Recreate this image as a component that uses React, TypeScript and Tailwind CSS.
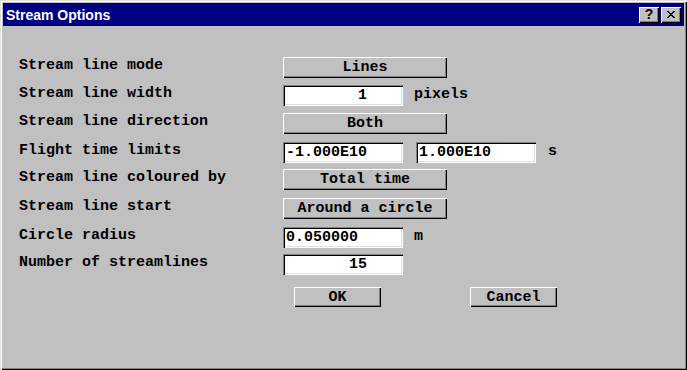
import React from 'react';

const mono = { fontFamily: '"Liberation Mono", "Courier New", monospace' };

// Win95-style raised push button
function PushButton({ label, className = '' }: { label: string; className?: string }) {
  return (
    <div
      className={`flex items-center justify-center bg-[#c0c0c0] font-bold text-[15px] text-black leading-none shadow-[inset_1px_1px_0_#ffffff,inset_-1px_-1px_0_#000000,inset_-2px_-2px_0_#808080] ${className}`}
    >
      {label}
    </div>
  );
}

// sunken edit field
function Field({ value, align = 'left', className = '' }: { value: string; align?: 'left' | 'right'; className?: string }) {
  return (
    <div
      className={`flex items-center bg-white font-bold text-[15px] text-black leading-none shadow-[inset_1px_1px_0_#808080,inset_2px_2px_0_#000000,inset_-1px_-1px_0_#ffffff,inset_-2px_-2px_0_#dfdfdf] ${
        align === 'right' ? 'justify-end pr-[36px]' : 'pl-[3px]'
      } ${className}`}
    >
      {value}
    </div>
  );
}

const rows = [
  { label: 'Stream line mode', mt: 'mt-0', kind: 'button', value: 'Lines' },
  { label: 'Stream line width', mt: 'mt-[7px]', kind: 'width' },
  { label: 'Stream line direction', mt: 'mt-[7px]', kind: 'button', value: 'Both' },
  { label: 'Flight time limits', mt: 'mt-[8px]', kind: 'limits' },
  { label: 'Stream line coloured by', mt: 'mt-[6px]', kind: 'button', value: 'Total time' },
  { label: 'Stream line start', mt: 'mt-[8px]', kind: 'button', value: 'Around a circle' },
  { label: 'Circle radius', mt: 'mt-[8px]', kind: 'radius' },
  { label: 'Number of streamlines', mt: 'mt-[6px]', kind: 'count' },
];

function Control({ row }: { row: (typeof rows)[number] }) {
  if (row.kind === 'button') return <PushButton label={row.value!} className="w-[164px] h-[21px]" />;
  if (row.kind === 'width')
    return (
      <div className="flex items-center">
        <Field value="1" align="right" className="w-[120px] h-[21px]" />
        <span className="ml-[11px] font-bold text-[15px]">pixels</span>
      </div>
    );
  if (row.kind === 'limits')
    return (
      <div className="flex items-center">
        <Field value="-1.000E10" className="w-[120px] h-[21px]" />
        <Field value="1.000E10" className="w-[120px] h-[21px] ml-[13px]" />
        <span className="ml-[12px] font-bold text-[15px]">s</span>
      </div>
    );
  if (row.kind === 'radius')
    return (
      <div className="flex items-center">
        <Field value="0.050000" className="w-[120px] h-[21px]" />
        <span className="ml-[11px] font-bold text-[15px]">m</span>
      </div>
    );
  return <Field value="15" align="right" className="w-[120px] h-[21px]" />;
}

export default function App() {
  return (
    <div
      className="w-[687px] h-[370px] bg-[#c0c0c0] p-[3px] flex flex-col shadow-[inset_1px_1px_0_#dfdfdf,inset_2px_2px_0_#ffffff,inset_-1px_-1px_0_#000000,inset_-2px_-2px_0_#808080]"
    >
      {/* Title bar */}
      <div className="h-[23px] bg-[#000080] flex items-center pl-[3px] pr-[3px]">
        <span
          className="text-white font-bold text-[14px] leading-none"
          style={{ fontFamily: '"Liberation Sans", Arial, sans-serif' }}
        >
          Stream Options
        </span>
        <div className="ml-auto flex gap-[2px]">
          <div className="w-[20px] h-[16px] bg-[#c0c0c0] flex items-center justify-center shadow-[inset_1px_1px_0_#ffffff,inset_-1px_-1px_0_#000000,inset_-2px_-2px_0_#808080]">
            <span
              className="text-black font-bold text-[14px] leading-none -mt-[1px]"
              style={{ fontFamily: '"Liberation Sans", Arial, sans-serif' }}
            >
              ?
            </span>
          </div>
          <div className="w-[20px] h-[16px] bg-[#c0c0c0] flex items-center justify-center shadow-[inset_1px_1px_0_#ffffff,inset_-1px_-1px_0_#000000,inset_-2px_-2px_0_#808080]">
            <svg width="8" height="7" viewBox="0 0 8 7" className="-mt-[1px]">
              <path d="M0 0h2v1h1v1h2V1h1V0h2v1H7v1H6v1H5v1h1v1h1v1h1v1H6V6H5V5H3v1H2v1H0V6h1V5h1V4h1V3H2V2H1V1H0z" fill="#000" />
            </svg>
          </div>
        </div>
      </div>

      {/* Body */}
      <div className="flex-1 flex flex-col pt-[31px] pl-[16px] text-black" style={mono}>
        {rows.map((row) => (
          <div key={row.label} className={`flex items-center h-[21px] ${row.mt}`}>
            <div className="w-[264px] font-bold text-[15px] leading-none -mt-[4px]">{row.label}</div>
            <Control row={row} />
          </div>
        ))}
        <div className="flex mt-[12px] pl-[275px]">
          <PushButton label="OK" className="w-[87px] h-[20px]" />
          <PushButton label="Cancel" className="w-[87px] h-[20px] ml-[89px]" />
        </div>
      </div>
    </div>
  );
}
